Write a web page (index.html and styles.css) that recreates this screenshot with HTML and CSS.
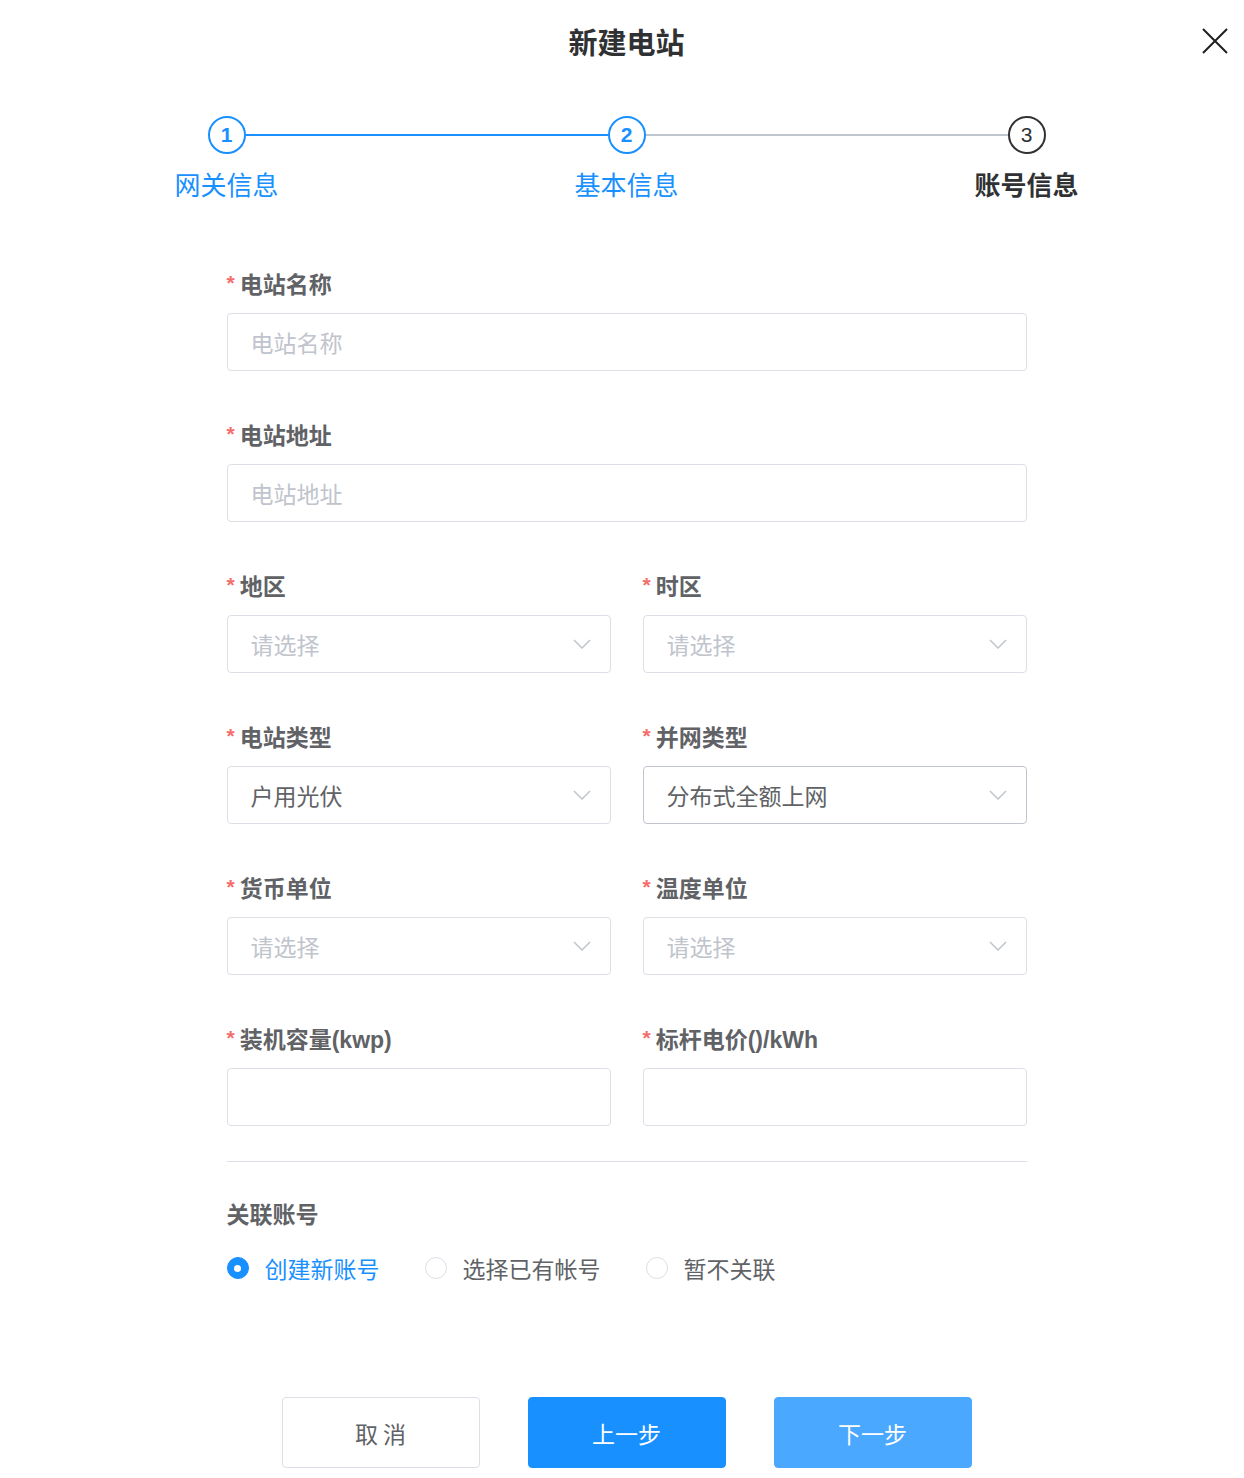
FILE: index.html
```html
<!DOCTYPE html>
<html lang="zh">
<head>
<meta charset="utf-8">
<title>新建电站</title>
<link rel="stylesheet" href="styles.css">
</head>
<body>
<div class="dialog">
  <div class="header">
    <h1 class="title">新建电站</h1>
    <button class="close" aria-label="关闭">
      <svg width="26" height="26" viewBox="0 0 26 26"><path d="M1 1L25 25M25 1L1 25" stroke="#1f1f1f" stroke-width="2" fill="none"/></svg>
    </button>
  </div>

  <div class="steps">
    <div class="circle done">1</div>
    <div class="line done"></div>
    <div class="circle done">2</div>
    <div class="line"></div>
    <div class="circle current">3</div>
  </div>
  <div class="step-labels">
    <div class="slot"><span class="slabel done">网关信息</span></div>
    <div></div>
    <div class="slot"><span class="slabel done">基本信息</span></div>
    <div></div>
    <div class="slot"><span class="slabel current">账号信息</span></div>
  </div>

  <div class="form">
    <div class="item">
      <div class="label"><span class="req">*</span>电站名称</div>
      <div class="input placeholder">电站名称</div>
    </div>
    <div class="item">
      <div class="label"><span class="req">*</span>电站地址</div>
      <div class="input placeholder">电站地址</div>
    </div>
    <div class="row">
      <div class="item">
        <div class="label"><span class="req">*</span>地区</div>
        <div class="input select placeholder"><span>请选择</span><svg class="chev" width="18" height="10" viewBox="0 0 18 10"><path d="M1 1L9 9L17 1" stroke="#c0c4cc" stroke-width="1.5" fill="none"/></svg></div>
      </div>
      <div class="item">
        <div class="label"><span class="req">*</span>时区</div>
        <div class="input select placeholder"><span>请选择</span><svg class="chev" width="18" height="10" viewBox="0 0 18 10"><path d="M1 1L9 9L17 1" stroke="#c0c4cc" stroke-width="1.5" fill="none"/></svg></div>
      </div>
    </div>
    <div class="row">
      <div class="item">
        <div class="label"><span class="req">*</span>电站类型</div>
        <div class="input select"><span>户用光伏</span><svg class="chev" width="18" height="10" viewBox="0 0 18 10"><path d="M1 1L9 9L17 1" stroke="#c0c4cc" stroke-width="1.5" fill="none"/></svg></div>
      </div>
      <div class="item">
        <div class="label"><span class="req">*</span>并网类型</div>
        <div class="input select hover"><span>分布式全额上网</span><svg class="chev" width="18" height="10" viewBox="0 0 18 10"><path d="M1 1L9 9L17 1" stroke="#c0c4cc" stroke-width="1.5" fill="none"/></svg></div>
      </div>
    </div>
    <div class="row">
      <div class="item">
        <div class="label"><span class="req">*</span>货币单位</div>
        <div class="input select placeholder"><span>请选择</span><svg class="chev" width="18" height="10" viewBox="0 0 18 10"><path d="M1 1L9 9L17 1" stroke="#c0c4cc" stroke-width="1.5" fill="none"/></svg></div>
      </div>
      <div class="item">
        <div class="label"><span class="req">*</span>温度单位</div>
        <div class="input select placeholder"><span>请选择</span><svg class="chev" width="18" height="10" viewBox="0 0 18 10"><path d="M1 1L9 9L17 1" stroke="#c0c4cc" stroke-width="1.5" fill="none"/></svg></div>
      </div>
    </div>
    <div class="row">
      <div class="item">
        <div class="label"><span class="req">*</span>装机容量(kwp)</div>
        <div class="input"></div>
      </div>
      <div class="item">
        <div class="label"><span class="req">*</span>标杆电价()/kWh</div>
        <div class="input"></div>
      </div>
    </div>
  </div>

  <div class="account">
    <div class="divider"></div>
    <div class="section-title">关联账号</div>
    <div class="radios">
      <label class="radio checked"><span class="dot"></span><span class="rtext">创建新账号</span></label>
      <label class="radio"><span class="dot"></span><span class="rtext">选择已有帐号</span></label>
      <label class="radio"><span class="dot"></span><span class="rtext">暂不关联</span></label>
    </div>
  </div>

  <div class="footer">
    <button class="btn">取 消</button>
    <button class="btn primary">上一步</button>
    <button class="btn primary light">下一步</button>
  </div>
</div>
</body>
</html>
```

FILE: styles.css
```css
* { box-sizing: border-box; }
html, body { margin: 0; padding: 0; background: #fff; }
body {
  font-family: "Noto Sans CJK SC", "Noto Sans", sans-serif;
  color: #606266;
}
.dialog {
  position: relative;
  width: 100%;
  padding-left: 9px;
  padding-bottom: 40px;
}
.header {
  height: 82px;
  display: flex;
  justify-content: center;
  align-items: center;
}
.title {
  margin: 0;
  font-size: 29px;
  line-height: 82px;
  font-weight: 700;
  color: #303133;
}
.close {
  position: absolute;
  top: 28px;
  right: 16px;
  width: 26px;
  height: 26px;
  padding: 0;
  border: 0;
  background: none;
  display: flex;
}

.steps, .step-labels {
  width: 838px;
  margin: 0 auto;
  display: grid;
  grid-template-columns: 38px 1fr 38px 1fr 38px;
  align-items: center;
}
.steps { margin-top: 34px; height: 38px; }
.circle {
  width: 38px;
  height: 38px;
  border-radius: 50%;
  border: 2px solid #1890ff;
  color: #1890ff;
  display: flex;
  align-items: center;
  justify-content: center;
  font-family: "Liberation Sans", Arial, sans-serif;
  font-weight: 700;
  font-size: 21px;
}
.circle.current { border-color: #303133; color: #303133; font-weight: 400; }
.line { height: 2px; background: #c0c4cc; }
.line.done { background: #1890ff; }
.step-labels { margin-top: 13px; }
.slot { display: flex; justify-content: center; width: 38px; }
.slabel {
  white-space: nowrap;
  font-size: 26px;
  line-height: 34px;
  color: #1890ff;
}
.slabel.current { color: #303133; font-weight: 700; }

.form {
  width: 800px;
  margin: 67px auto 0;
  display: flex;
  flex-direction: column;
  gap: 48px;
}
.row {
  display: grid;
  grid-template-columns: 1fr 1fr;
  gap: 32px;
}
.label {
  height: 30px;
  display: flex;
  align-items: center;
  white-space: nowrap;
  font-size: 23px;
  font-weight: 700;
  color: #606266;
  font-family: "Liberation Sans", "Noto Sans CJK SC", sans-serif;
}
.req {
  color: #f56c6c;
  margin-right: 5px;
  font-weight: 700;
  font-size: 21px;
  line-height: 1;
  position: relative;
  top: -1px;
}
.input {
  margin-top: 15px;
  height: 58px;
  border: 1px solid #dcdfe6;
  border-radius: 4px;
  padding: 0 19px 0 23px;
  display: flex;
  align-items: center;
  justify-content: space-between;
  font-size: 23px;
  color: #606266;
}
.input.placeholder { color: #c0c4cc; }
.input.hover { border-color: #c0c4cc; }
.chev { flex: none; }

.account { width: 800px; margin: 35px auto 0; }
.divider { height: 1px; background: #dcdfe6; }
.section-title {
  margin-top: 36px;
  height: 30px;
  display: flex;
  align-items: center;
  font-size: 23px;
  font-weight: 700;
  color: #606266;
}
.radios {
  margin-top: 25px;
  display: flex;
  align-items: center;
  height: 30px;
}
.radio {
  display: flex;
  align-items: center;
  margin-right: 45px;
  font-size: 23px;
  color: #606266;
}
.dot {
  width: 22px;
  height: 22px;
  border-radius: 50%;
  border: 1px solid #dcdfe6;
  margin-right: 16px;
  background: #fff;
  display: flex;
  align-items: center;
  justify-content: center;
}
.radio.checked { color: #1890ff; }
.radio.checked .dot { background: #1890ff; border-color: #1890ff; }
.radio.checked .dot::after {
  content: "";
  width: 7px;
  height: 7px;
  border-radius: 50%;
  background: #fff;
}

.footer {
  margin-top: 114px;
  display: flex;
  justify-content: center;
  gap: 48px;
}
.btn {
  width: 198px;
  height: 71px;
  border: 1px solid #dcdfe6;
  border-radius: 4px;
  background: #fff;
  color: #606266;
  font-family: "Noto Sans CJK SC", sans-serif;
  font-size: 23px;
  padding: 0;
}
.btn.primary { background: #1890ff; border-color: #1890ff; color: #fff; }
.btn.primary.light { background: #4aa8ff; border-color: #4aa8ff; }
```
